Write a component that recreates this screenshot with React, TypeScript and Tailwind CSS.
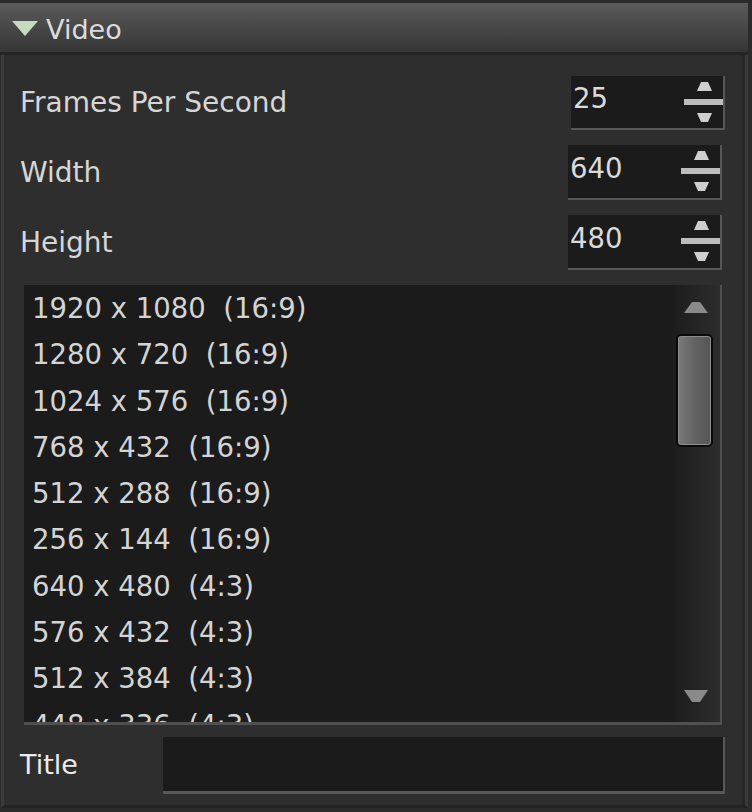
import React from 'react';

const resolutions = [
  '1920 x 1080  (16:9)',
  '1280 x 720  (16:9)',
  '1024 x 576  (16:9)',
  '768 x 432  (16:9)',
  '512 x 288  (16:9)',
  '256 x 144  (16:9)',
  '640 x 480  (4:3)',
  '576 x 432  (4:3)',
  '512 x 384  (4:3)',
  '448 x 336  (4:3)',
];

const SpinBox: React.FC<{ value: string; className?: string }> = ({ value, className }) => (
  <div className={`flex h-full w-[154px] bg-[#1b1b1b] border-r-2 border-b-2 border-[#575757] ${className ?? ''}`}>
    <div className="flex-1 pl-[2px] pb-[6px] flex items-center text-[27.5px] text-[#dadada]">{value}</div>
    <div className="w-[39px] flex flex-col items-center pt-[6px]">
      <svg width="15" height="9" viewBox="0 0 15 9" className="ml-[2px]">
        <polygon points="4,0 11,0 15,9 0,9" fill="#cfcfcf" />
      </svg>
      <div className="w-full h-[6px] bg-[#bdbdbd] mt-[8px]" />
      <svg width="15" height="9" viewBox="0 0 15 9" className="ml-[2px] mt-[8px]">
        <polygon points="0,0 15,0 11,9 4,9" fill="#cfcfcf" />
      </svg>
    </div>
  </div>
);

const FieldRow: React.FC<{ label: string; value: string; h: string; boxClass?: string }> = ({ label, value, h, boxClass }) => (
  <div className={`flex items-center ${h}`}>
    <span className="flex-1 text-[28px] text-[#d6d6d6]">{label}</span>
    <SpinBox value={value} className={boxClass} />
  </div>
);

export default function App() {
  return (
    <div className="w-[752px] h-[812px] bg-[#2b2b2b] pt-[3px] flex flex-col overflow-hidden font-['DejaVu_Sans','Verdana',sans-serif]">
      {/* header */}
      <div className="h-[52px] mr-[4px] bg-gradient-to-b from-[#5b5b5b] to-[#353535] border-b-[3px] border-[#242424] flex items-center pl-[12px]">
        <svg width="26" height="15" viewBox="0 0 26 15" className="mt-[1px]">
          <polygon points="0,0 26,0 13,15" fill="#c6dcc0" />
        </svg>
        <span className="ml-[8px] text-[27px] text-[#dcdcdc] leading-none pt-[4px]">Video</span>
      </div>

      {/* body */}
      <div className="flex-1 ml-[1px] mr-[4px] mb-[4px] border-l-[3px] border-r-[3px] border-l-[#3b3b3b] border-r-[#3a3a3a] border-b-[3px] border-b-[#232323] flex min-h-0">
        <div className="flex-1 bg-[#2e2e2e] border-r-[3px] border-[#272727] flex flex-col pl-[16px] pt-[21px]">
          <FieldRow label="Frames Per Second" value="25" h="h-[54px] pr-[17px]" />
          <FieldRow label="Width" value="640" h="h-[55px] mt-[15px] pr-[20px]" />
          <FieldRow label="Height" value="480" h="h-[55px] mt-[15px] pr-[20px]" />

          {/* resolution list */}
          <div className="mt-[15px] ml-[4px] mr-[20px] h-[440px] bg-[#1b1b1b] border-r-2 border-b-[3px] border-[#505050] flex overflow-hidden">
            <div className="flex-1 overflow-hidden pl-[8px]">
              {resolutions.map((r) => (
                <div key={r} className="h-[46.3px] leading-[46.3px] text-[27.5px] text-[#d4d4d4] whitespace-pre">
                  {r}
                </div>
              ))}
            </div>
            <div className="w-[50px] bg-gradient-to-r from-[#1b1b1b] to-[#2d2d2d] flex flex-col">
              <svg width="24" height="11" viewBox="0 0 24 11" className="ml-[14px] mt-[17px]">
                <polygon points="8,0 16,0 24,11 0,11" fill="#8a8a8a" />
              </svg>
              <div className="ml-[6px] mt-[21px] w-[37px] h-[113px] rounded-[5px] border-2 border-[#0a0a0a] bg-gradient-to-r from-[#7a7a7a] via-[#636363] to-[#555555] shadow-[inset_0_0_0_1px_#8c8c8c]" />
              <div className="flex-1" />
              <svg width="24" height="12" viewBox="0 0 24 12" className="ml-[14px] mb-[20px]">
                <polygon points="0,0 24,0 16,12 8,12" fill="#8a8a8a" />
              </svg>
            </div>
          </div>

          {/* title */}
          <div className="mt-[12px] h-[57px] flex items-center pr-[17px]">
            <span className="w-[143px] text-[27px] text-[#ececec]">Title</span>
            <div className="flex-1 h-full bg-[#1b1b1b] border-r-2 border-b-[3px] border-[#575757]" />
          </div>
        </div>
      </div>
    </div>
  );
}
